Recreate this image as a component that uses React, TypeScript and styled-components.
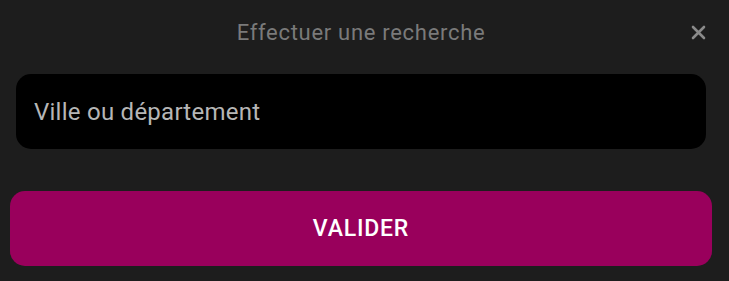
import React, { useState } from 'react';
import styled, { createGlobalStyle } from 'styled-components';

const GlobalStyle = createGlobalStyle`
  html, body {
    margin: 0;
    padding: 0;
    background: #1d1d1d;
    font-family: Roboto, "Noto Sans", sans-serif;
  }
`;

const App: React.FC = () => {
    const [query, setQuery] = useState('');

    return (
        <>
            <GlobalStyle />
            <Panel>
                <Header>
                    <Title>Effectuer une recherche</Title>
                    <CloseButton aria-label="Fermer">
                        <svg width="15" height="15" viewBox="0 0 15 15">
                            <path d="M2 2 L13 13 M13 2 L2 13" stroke="currentColor" strokeWidth="2.6" strokeLinecap="round" />
                        </svg>
                    </CloseButton>
                </Header>
                <SearchInput
                    value={query}
                    onChange={(e) => setQuery(e.target.value)}
                    placeholder="Ville ou département"
                />
                <SubmitButton>VALIDER</SubmitButton>
            </Panel>
        </>
    );
};

const Panel = styled.div`
  width: 729px;
  height: 281px;
  box-sizing: border-box;
  padding: 0 17px 0 10px;
  display: flex;
  flex-direction: column;
`;

const Header = styled.div`
  position: relative;
  height: 66px;
  display: flex;
  align-items: center;
  justify-content: center;
  padding-bottom: 1px;
  box-sizing: border-box;
`;

const Title = styled.h2`
  margin: 0;
  font-size: 22px;
  font-weight: 400;
  letter-spacing: 0.7px;
  color: #7a7a7a;
`;

const CloseButton = styled.button`
  position: absolute;
  right: 6px;
  top: 25px;
  width: 15px;
  height: 15px;
  padding: 0;
  border: none;
  background: none;
  color: #8a8a8a;
  display: flex;
  cursor: pointer;
`;

const SearchInput = styled.input`
  margin: 8px 6px 0;
  height: 75px;
  box-sizing: border-box;
  padding: 0 18px;
  border: none;
  outline: none;
  border-radius: 15px;
  background: #000;
  color: #e0e0e0;
  font-family: Roboto, "Noto Sans", sans-serif;
  font-size: 24px;
  letter-spacing: 0.25px;

  &::placeholder {
    color: #b6b6b6;
  }
`;

const SubmitButton = styled.button`
  margin-top: 42px;
  height: 75px;
  border: none;
  border-radius: 15px;
  background: #99005c;
  color: #fff;
  font-family: Roboto, "Noto Sans", sans-serif;
  font-size: 23px;
  font-weight: 500;
  letter-spacing: 0.8px;
  cursor: pointer;
`;

export default App;
